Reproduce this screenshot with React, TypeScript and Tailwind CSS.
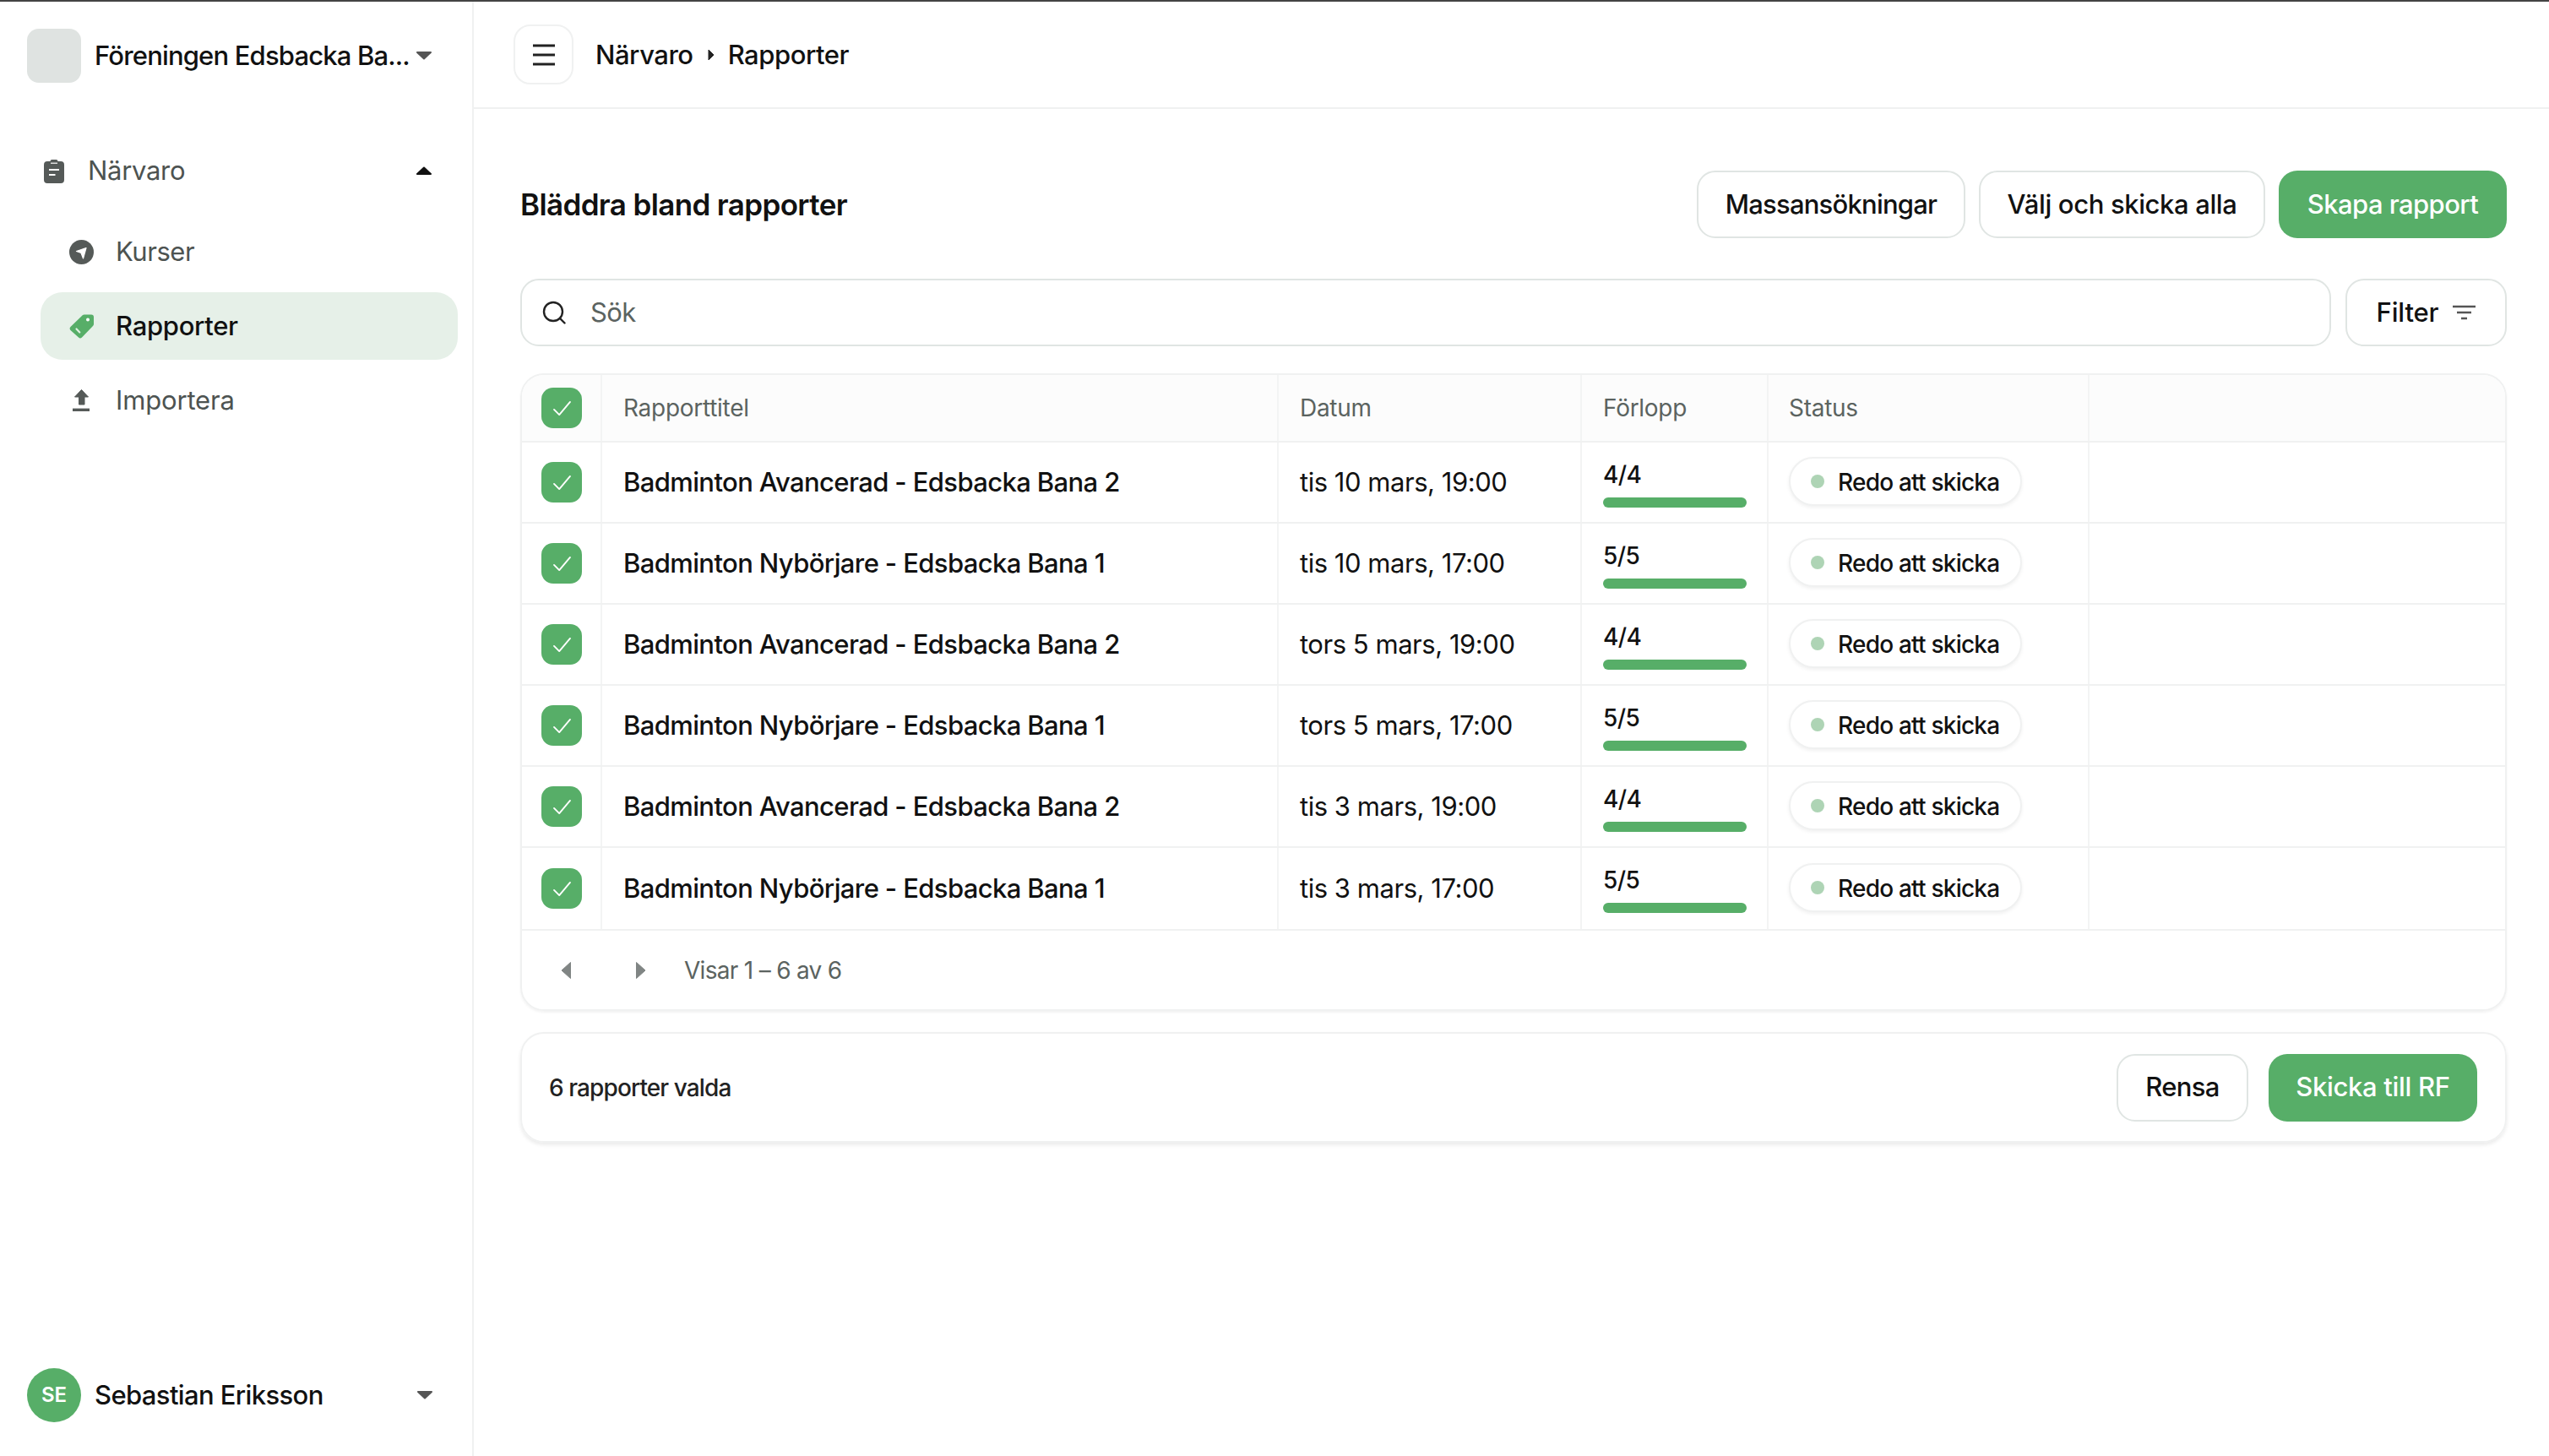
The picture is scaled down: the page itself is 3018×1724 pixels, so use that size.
const font = { fontFamily: "Inter, sans-serif" };

const rows = [
  { title: "Badminton Avancerad - Edsbacka Bana 2", date: "tis 10 mars, 19:00", progress: "4/4" },
  { title: "Badminton Nybörjare - Edsbacka Bana 1", date: "tis 10 mars, 17:00", progress: "5/5" },
  { title: "Badminton Avancerad - Edsbacka Bana 2", date: "tors 5 mars, 19:00", progress: "4/4" },
  { title: "Badminton Nybörjare - Edsbacka Bana 1", date: "tors 5 mars, 17:00", progress: "5/5" },
  { title: "Badminton Avancerad - Edsbacka Bana 2", date: "tis 3 mars, 19:00", progress: "4/4" },
  { title: "Badminton Nybörjare - Edsbacka Bana 1", date: "tis 3 mars, 17:00", progress: "5/5" },
];

const COLS = "grid grid-cols-[95px_801px_359px_221px_380px_1fr]";

function Caret({ up, className }: { up?: boolean; className?: string }) {
  return (
    <svg viewBox="0 0 20 10" className={`h-[10px] w-[20px] shrink-0 ${className ?? ""}`}>
      <path d={up ? "M2 9 H18 L10 1.5 Z" : "M2 1 H18 L10 8.5 Z"} fill="currentColor" stroke="currentColor" strokeWidth="2" strokeLinejoin="round" />
    </svg>
  );
}

function Check() {
  return (
    <span className="flex h-[48px] w-[48px] items-center justify-center rounded-[14px] bg-[#57ae68]">
      <svg viewBox="0 0 24 20" className="h-[19px] w-[23px]" fill="none" stroke="white" strokeWidth="2" strokeLinecap="round" strokeLinejoin="round">
        <path d="M2 11.5 L8.5 18 L22 2" />
      </svg>
    </span>
  );
}

function Button({ children, primary, className }: { children: React.ReactNode; primary?: boolean; className?: string }) {
  return (
    <button
      className={`flex h-[80px] items-center justify-center rounded-[22px] text-[31px] font-medium ${
        primary ? "bg-[#57ae68] text-white" : "border-[2px] border-[#e0e5e3] bg-white text-[#111]"
      } ${className ?? ""}`}
    >
      {children}
    </button>
  );
}

function Sidebar() {
  return (
    <aside className="flex w-[561px] shrink-0 flex-col border-r-[2px] border-[#f0f1f1] px-[32px] pb-[40px] pt-[32px]">
      <div className="flex h-[64px] items-center">
        <div className="h-[64px] w-[64px] shrink-0 rounded-[14px] bg-[#dfe3e1]" />
        <span className="ml-[16px] w-[380px] whitespace-nowrap text-[31px] font-medium leading-[40px] tracking-[-0.027em] text-[#111]">Föreningen Edsbacka Ba...</span>
        <Caret className="text-[#555]" />
      </div>

      <div className="mt-[82px] flex h-[44px] items-center pl-[19px]">
        <svg viewBox="0 0 26 29" className="h-[29px] w-[26px]">
          <path d="M5 3h3.5a2 2 0 0 1 2-2h5a2 2 0 0 1 2 2H21a4 4 0 0 1 4 4v18a4 4 0 0 1-4 4H5a4 4 0 0 1-4-4V7a4 4 0 0 1 4-4z" fill="#555a58" />
          <path d="M9 5.2h8" stroke="white" strokeWidth="1.2" />
          <path d="M7 13h12M7 19h7.5" stroke="white" strokeWidth="2.2" />
        </svg>
        <span className="ml-[27px] flex-1 text-[31px] leading-[40px] tracking-[-0.01em] text-[#4d5351]">Närvaro</span>
        <Caret up className="mr-[15px] text-[#111]" />
      </div>

      <div className="mt-[52px] flex h-[44px] items-center pl-[50px]">
        <svg viewBox="0 0 29 29" className="h-[29px] w-[29px]">
          <circle cx="14.5" cy="14.5" r="14.5" fill="#555a58" />
          <path d="M20 9.5 L8.5 13.5 L14 15.5 L16.5 22 Z" fill="white" stroke="white" strokeWidth="1.2" strokeLinejoin="round" />
        </svg>
        <span className="ml-[26px] text-[31px] leading-[40px] tracking-[-0.015em] text-[#4d5351]">Kurser</span>
      </div>

      <div className="mt-[26px] ml-[16px] flex h-[80px] w-[494px] items-center self-start rounded-[26px] bg-[#e6f0e8] pl-[34px]">
        <svg viewBox="0 0 29 29" className="h-[29px] w-[29px]">
          <path d="M18 0.5 H26 a3 3 0 0 1 3 3 V12 a3 3 0 0 1-1 2 L15 27.5 a3 3 0 0 1-4 0 L1.5 19 a3 3 0 0 1 0-4 L16 1 a3 3 0 0 1 2-0.5z" fill="#57ae68" />
          <circle cx="22" cy="6.5" r="2" fill="white" />
          <path d="M8.5 17.5 L12.3 21.5" stroke="#dff0e2" strokeWidth="2.2" strokeLinecap="round" />
        </svg>
        <span className="ml-[26px] text-[31px] font-medium leading-[40px] tracking-[-0.01em] text-[#111]">Rapporter</span>
      </div>

      <div className="mt-[26px] flex h-[44px] items-center pl-[54px]">
        <svg viewBox="0 0 20 26" className="h-[26px] w-[20px]">
          <path d="M10.5 0.5 L18.5 9 H14 V18 H7.5 V9 H2.5 Z" fill="#555a58" stroke="#555a58" strokeLinejoin="round" />
          <path d="M0 24.3 H20" stroke="#555a58" strokeWidth="3.4" />
        </svg>
        <span className="ml-[31px] text-[31px] leading-[40px] tracking-[-0.005em] text-[#4d5351]">Importera</span>
      </div>

      <div className="mt-auto flex h-[64px] items-center">
        <div className="flex h-[64px] w-[64px] shrink-0 items-center justify-center rounded-full bg-[#57ae68] text-[24px] font-semibold text-white">SE</div>
        <span className="ml-[16px] flex-1 text-[31px] font-medium leading-[40px] tracking-[-0.02em] text-[#111]">Sebastian Eriksson</span>
        <Caret className="mr-[14px] text-[#555]" />
      </div>
    </aside>
  );
}

function Table() {
  return (
    <div className="mt-[32px] overflow-hidden rounded-[28px] border-[2px] border-[#f0f1f1] shadow-[0_2px_3px_rgba(0,0,0,0.05)]">
      <div className={`${COLS} h-[80px] border-b-[2px] border-[#f0f1f1] bg-[#fcfcfc] text-[28px] tracking-[-0.01em] text-[#5b6360]`}>
        <div className="flex items-center border-r-[2px] border-[#f3f4f4] pl-[23px]"><Check /></div>
        <div className="flex items-center border-r-[2px] border-[#f3f4f4] pl-[25px]">Rapporttitel</div>
        <div className="flex items-center border-r-[2px] border-[#f3f4f4] pl-[25px]">Datum</div>
        <div className="flex items-center border-r-[2px] border-[#f3f4f4] pl-[25px]">Förlopp</div>
        <div className="flex items-center border-r-[2px] border-[#f3f4f4] pl-[24px]">Status</div>
        <div />
      </div>
      {rows.map((r, i) => (
        <div key={i} className={`${COLS} border-b-[2px] border-[#f0f1f1] ${i === 5 ? "h-[98px]" : "h-[96px]"}`}>
          <div className="flex items-center border-r-[2px] border-[#f3f4f4] pl-[23px]"><Check /></div>
          <div className="flex items-center border-r-[2px] border-[#f3f4f4] pl-[25px] text-[31px] font-medium tracking-[-0.02em] text-[#111]">{r.title}</div>
          <div className="flex items-center border-r-[2px] border-[#f3f4f4] pl-[25px] text-[31px] tracking-[-0.015em] text-[#111]">{r.date}</div>
          <div className="flex flex-col border-r-[2px] border-[#f3f4f4] pl-[25px] pt-[20px]">
            <span className="text-[28px] font-medium leading-[36px] tracking-[-0.02em] text-[#111]">{r.progress}</span>
            <span className="mt-[9px] h-[12px] w-[170px] rounded-full bg-[#57ae68]" />
          </div>
          <div className="flex items-center border-r-[2px] border-[#f3f4f4] pb-[2px] pl-[24px]">
            <span className="flex h-[58px] w-[276px] items-center rounded-full border-[2px] border-[#f0f1f1] bg-white pl-[24px] shadow-[0_2px_4px_rgba(0,0,0,0.06)]">
              <span className="h-[16px] w-[16px] rounded-full bg-[#aed4b5]" />
              <span className="ml-[16px] mt-[2px] text-[28px] font-medium tracking-[-0.028em] text-[#111]">Redo att skicka</span>
            </span>
          </div>
          <div />
        </div>
      ))}
      <div className="flex h-[93px] items-center text-[28px] tracking-[-0.025em] text-[#5b6360]">
        <svg viewBox="0 0 14 22" className="ml-[45px] h-[22px] w-[14px]"><path d="M12.5 1.5 V20.5 L2 11 Z" fill="#808584" stroke="#808584" strokeLinejoin="round" /></svg>
        <svg viewBox="0 0 14 22" className="ml-[75px] h-[22px] w-[14px]"><path d="M1.5 1.5 V20.5 L12 11 Z" fill="#808584" stroke="#808584" strokeLinejoin="round" /></svg>
        <span className="ml-[44px]">Visar 1 – 6 av 6</span>
      </div>
    </div>
  );
}

export default function App() {
  return (
    <div className="flex h-screen w-full flex-col bg-white" style={font}>
      <div className="h-[2px] bg-[#444]" />
      <div className="flex min-h-0 flex-1">
        <Sidebar />
        <main className="flex min-w-0 flex-1 flex-col">
          <header className="flex h-[127px] shrink-0 items-center border-b-[2px] border-[#f0f1f1] pl-[47px]">
            <button className="flex h-[71px] w-[71px] items-center justify-center rounded-[20px] border-[2px] border-[#f0f1f1]">
              <svg viewBox="0 0 26 26" className="h-[26px] w-[26px]" stroke="#222" strokeWidth="3">
                <path d="M0 2H26M0 13H26M0 24H26" />
              </svg>
            </button>
            <span className="ml-[26px] mt-[2px] text-[31px] font-medium tracking-[-0.015em] text-[#111]">Närvaro</span>
            <svg viewBox="0 0 8 14" className="ml-[17px] h-[14px] w-[8px]"><path d="M1 1 V13 L7 7 Z" fill="#222" stroke="#222" strokeLinejoin="round" /></svg>
            <span className="ml-[16px] mt-[2px] text-[31px] font-medium tracking-[-0.015em] text-[#111]">Rapporter</span>
          </header>

          <div className="flex flex-col pl-[55px] pr-[50px]">
            <div className="mt-[73px] flex items-center justify-between">
              <h1 className="text-[35px] font-semibold tracking-[-0.018em] text-[#111]">Bläddra bland rapporter</h1>
              <div className="flex gap-[16px]">
                <Button className="w-[318px] tracking-[-0.025em]">Massansökningar</Button>
                <Button className="w-[339px] tracking-[-0.012em]">Välj och skicka alla</Button>
                <Button primary className="w-[270px] tracking-[-0.018em]">Skapa rapport</Button>
              </div>
            </div>

            <div className="mt-[48px] flex gap-[17px]">
              <div className="flex h-[80px] flex-1 items-center rounded-[22px] border-[2px] border-[#e0e5e3] pl-[24px]">
                <svg viewBox="0 0 28 28" className="h-[28px] w-[28px]" fill="none" stroke="#222" strokeWidth="2.4" strokeLinecap="round">
                  <circle cx="13" cy="13" r="11" />
                  <path d="M21 21 L26.5 26.5" />
                </svg>
                <span className="ml-[29px] text-[31px] tracking-[-0.02em] text-[#5b6360]">Sök</span>
              </div>
              <Button className="w-[191px] gap-[17px] tracking-[-0.005em]">
                Filter
                <svg viewBox="0 0 27 18" className="h-[18px] w-[27px]" stroke="#555" strokeWidth="2.4">
                  <path d="M0 2H27M5 9H22M10 16H17" />
                </svg>
              </Button>
            </div>

            <Table />

            <div className="mt-[25px] flex h-[131px] items-center justify-between rounded-[28px] border-[2px] border-[#f0f1f1] pl-[32px] pr-[33px] shadow-[0_3px_4px_rgba(0,0,0,0.08)]">
              <span className="text-[28px] font-medium tracking-[-0.032em] text-[#222]">6 rapporter valda</span>
              <div className="flex gap-[24px]">
                <Button className="w-[156px] tracking-[-0.02em]">Rensa</Button>
                <Button primary className="w-[247px] tracking-[-0.01em]">Skicka till RF</Button>
              </div>
            </div>
          </div>
        </main>
      </div>
    </div>
  );
}
